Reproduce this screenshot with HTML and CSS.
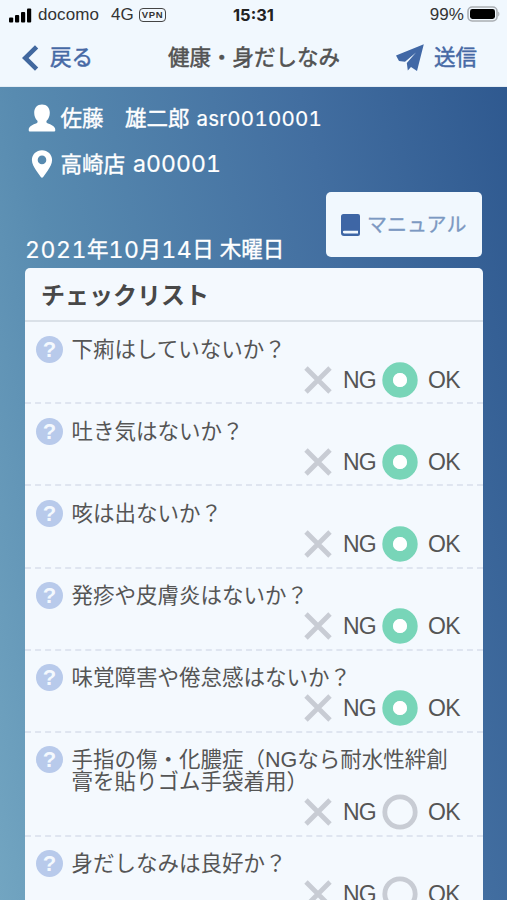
FILE: index.html
```html
<!DOCTYPE html>
<html lang="ja">
<head>
<meta charset="utf-8">
<title>健康・身だしなみ</title>
<link rel="stylesheet" href="styles.css">
</head>
<body>
<svg class="defs" width="0" height="0" aria-hidden="true">
  <symbol id="cross" viewBox="0 0 28 28"><path d="M2 2L26 26M26 2L2 26" stroke="#c8ccd4" stroke-width="4.8" fill="none"/></symbol>
  <symbol id="on" viewBox="0 0 36 36"><circle cx="18" cy="18" r="12.3" fill="none" stroke="#78d5b8" stroke-width="10.8"/><circle cx="18" cy="18" r="7" fill="#fff"/></symbol>
  <symbol id="off" viewBox="0 0 36 36"><circle cx="18" cy="18" r="15.2" fill="none" stroke="#c8ccd4" stroke-width="4.8"/></symbol>
</svg>
<header class="top">
  <div class="status">
    <svg class="signal" viewBox="0 0 23 15"><rect x="0" y="9.5" width="4.2" height="5" rx="1"/><rect x="6" y="7" width="4.2" height="7.5" rx="1"/><rect x="12" y="4" width="4.2" height="10.5" rx="1"/><rect x="18" y="0.5" width="4.2" height="14" rx="1"/></svg>
    <span class="carrier">docomo</span>
    <span class="net">4G</span>
    <span class="vpn">VPN</span>
    <span class="clock">15:31</span>
    <span class="percent">99%</span>
    <svg class="battery" viewBox="0 0 33 16"><rect x="1" y="1" width="29" height="14" rx="4.2" fill="none" stroke="#aaaeb3" stroke-width="1.6"/><rect x="3" y="3" width="25" height="10" rx="2.4"/><path d="M31.2 5.5c1.6.8 1.6 4.2 0 5z" fill="#aaaeb3"/></svg>
  </div>
  <nav class="nav">
    <a class="back"><svg viewBox="0 0 17 26"><path d="M14.6 1.8L3.2 13L14.6 24.2" fill="none" stroke="#41689f" stroke-width="4.6"/></svg><span>戻る</span></a>
    <h1>健康・身だしなみ</h1>
    <a class="send"><svg viewBox="0 0 28 28"><path d="M27.8 0.3L0 11.5L3 17L9 17.8L20 8.5L10.8 19L11.8 26.5L15 23L21 27Z" fill="#4168a6"/></svg><span>送信</span></a>
  </nav>
</header>
<main>
  <div class="info user">
    <svg viewBox="0 0 28 28"><path d="M14 0.5c4.9 0 7.8 3.500 7.800 8.200 0 3.500-1.300 6.200-3 7.800-.7.800-.5 2.300.6 2.800 3.600 1.400 7.900 3 7.900 6.600 0 1-.5 1.600-1.600 1.600H2.300c-1.100 0-1.600-.6-1.600-1.600 0-3.600 4.300-5.200 7.900-6.600 1.100-.5 1.300-2 .6-2.800-1.700-1.600-3-4.300-3-7.800C6.200 4 9.100.5 14 .5z" fill="#fff"/></svg>
    <span>佐藤　雄二郎</span><span class="code">asr0010001</span>
  </div>
  <div class="info shop">
    <svg viewBox="0 0 28 28"><path fill-rule="evenodd" d="M14 0.300C8.300.3 3.900 4.600 3.900 10c0 4 2.200 7.200 4.300 10.400L12.800 27c.7 1 1.700 1 2.400 0l4.600-6.600C21.900 17.200 24.100 14 24.100 10 24.100 4.600 19.700.3 14 .3zM14 5.600a4.300 4.300 0 1 1 0 8.600 4.300 4.300 0 0 1 0-8.600z" fill="#fff"/></svg>
    <span>高崎店</span><span class="code">a00001</span>
  </div>
  <div class="bar">
    <p class="date"><b>2021</b>年<b>10</b>月<b>14</b>日<i></i>木曜日</p>
    <a class="manual"><svg viewBox="0 0 19 22"><path fill-rule="evenodd" d="M2.500 0H17a2 2 0 0 1 2 2V20a2 2 0 0 1-2 2H3a3 3 0 0 1-3-3V2.500A2.500 2.500 0 0 1 2.500 0zM3.200 16.800a1.300 1.300 0 0 0 0 2.600H17V16.800z" fill="#3e66a5"/></svg><span>マニュアル</span></a>
  </div>
  <section class="card">
    <h2>チェックリスト</h2>
    <div class="row"><div class="q"><span class="help">?</span><p>下痢はしていないか<em>？</em></p></div><div class="opts"><svg class="x"><use href="#cross"/></svg><span class="ng">NG</span><svg class="o"><use href="#on"/></svg><span class="ok">OK</span></div></div>
    <div class="row"><div class="q"><span class="help">?</span><p>吐き気はないか<em>？</em></p></div><div class="opts"><svg class="x"><use href="#cross"/></svg><span class="ng">NG</span><svg class="o"><use href="#on"/></svg><span class="ok">OK</span></div></div>
    <div class="row"><div class="q"><span class="help">?</span><p>咳は出ないか<em>？</em></p></div><div class="opts"><svg class="x"><use href="#cross"/></svg><span class="ng">NG</span><svg class="o"><use href="#on"/></svg><span class="ok">OK</span></div></div>
    <div class="row"><div class="q"><span class="help">?</span><p>発疹や皮膚炎はないか<em>？</em></p></div><div class="opts"><svg class="x"><use href="#cross"/></svg><span class="ng">NG</span><svg class="o"><use href="#on"/></svg><span class="ok">OK</span></div></div>
    <div class="row"><div class="q"><span class="help">?</span><p>味覚障害や倦怠感はないか<em>？</em></p></div><div class="opts"><svg class="x"><use href="#cross"/></svg><span class="ng">NG</span><svg class="o"><use href="#on"/></svg><span class="ok">OK</span></div></div>
    <div class="row"><div class="q"><span class="help">?</span><p>手指の傷・化膿症（NGなら耐水性絆創<br>膏を貼りゴム手袋着用）</p></div><div class="opts"><svg class="x"><use href="#cross"/></svg><span class="ng">NG</span><svg class="o"><use href="#off"/></svg><span class="ok">OK</span></div></div>
    <div class="row"><div class="q"><span class="help">?</span><p>身だしなみは良好か<em>？</em></p></div><div class="opts"><svg class="x"><use href="#cross"/></svg><span class="ng">NG</span><svg class="o"><use href="#off"/></svg><span class="ok">OK</span></div></div>
  </section>
</main>
</body>
</html>
```
FILE: styles.css
```css
* { box-sizing: border-box; margin: 0; padding: 0; }
html, body { height: 900px; overflow: hidden; }
body {
  width: 507px;
  font-family: "Liberation Sans", "Noto Sans CJK JP", sans-serif;
  color: #555;
  background: linear-gradient(77deg, #72a5c1 0%, #588bb0 28%, #426ea0 68%, #2d578e 100%);
}
svg { display: block; flex: none; }
.defs { position: absolute; }
.top { height: 87px; background: #f1f8fe; border-bottom: 1px solid #e4edf5; }
.status { height: 30px; display: flex; align-items: center; padding: 0 8px 0 9px; color: #333; font-size: 17px; line-height: 30px; white-space: nowrap; }
.signal { width: 23px; height: 15px; }
.carrier { width: 67px; margin-left: 6px; letter-spacing: .1px; }
.net { width: 22px; margin-left: 6px; }
.vpn { width: 27px; height: 14px; margin-left: 6px; border: 1.4px solid #444; border-radius: 4px; font: bold 9.5px/11.5px "Liberation Sans", sans-serif; letter-spacing: .6px; text-align: center; }
.clock { margin-left: 67px; width: 44px; color: #222; font: bold 16.5px/30px Inter, sans-serif; }
.percent { margin-left: auto; letter-spacing: .1px; }
.battery { width: 33px; height: 16px; margin-left: 3px; margin-right: -1px; transform: translateY(-1px); }
.nav { height: 56px; display: flex; align-items: center; font-size: 21.5px; line-height: 56px; white-space: nowrap; }
.back, .send { display: flex; align-items: center; color: #4669a5; -webkit-text-stroke: .5px #4669a5; }
.back { margin-left: 22px; }
.back svg { width: 17px; height: 26px; margin-right: 11px; }
.nav h1 { font-size: 21.5px; font-weight: 400; -webkit-text-stroke: .5px #4c4c4c; margin-left: 75px; }
.send { margin-left: auto; margin-right: 30px; }
.send svg { width: 28px; height: 28px; margin-right: 10px; }
main { padding: 0 25px; }
.info { display: flex; align-items: center; height: 46px; padding-left: 3px; color: #fff; font-size: 21.5px; line-height: 46px; -webkit-text-stroke: .4px #fff; white-space: nowrap; }
.info svg { width: 28px; height: 28px; margin-right: 4.5px; }
.user { margin-top: 8px; }
.info span:not(.code) { padding-top: 2px; }
.code, .date b { font-family: Inter, "Liberation Sans", sans-serif; font-weight: 400; font-feature-settings: "tnum"; -webkit-text-stroke: .2px #fff; }
.code { margin-left: 7px; font-size: 20.5px; letter-spacing: .25px; }
.user .code { padding-top: 2px; }
.shop .code { margin-left: 8px; font-size: 23px; letter-spacing: .1px; }
.bar { display: flex; justify-content: space-between; height: 81px; padding-top: 5px; }
.date { display: flex; height: 32px; margin-top: 42px; color: #fff; font-size: 21.5px; line-height: 32px; -webkit-text-stroke: .4px #fff; white-space: nowrap; }
.date b { font-size: 23px; letter-spacing: .6px; }
.date i { width: 6px; }
.manual { display: flex; align-items: center; width: 156px; height: 65px; padding-left: 15px; border-radius: 5px; background: #f1f8fe; color: #7c99c2; font-size: 20px; line-height: 65px; -webkit-text-stroke: .3px #7c99c2; white-space: nowrap; }
.manual span { padding-top: 2px; }
.manual svg { width: 19px; height: 22px; margin-right: 7px; }
.card { width: 458px; height: 632px; overflow: hidden; border-radius: 5px 5px 0 0; background: #f4f9fe; }
.card h2 { height: 54px; padding: 1px 0 0 16px; border-bottom: 2px solid #dae1e8; font-size: 24px; line-height: 53px; font-weight: 700; color: #484848; white-space: nowrap; }
.row { padding: 13.5px 0 5.2px 11px; border-bottom: 2px dashed #dfe5f0; height: 82.2px; }
.row:nth-child(7) { height: 103.7px; }
.q { display: flex; height: 26px; }
.help { width: 27px; height: 27px; margin-right: 8.5px; border-radius: 50%; background: #b8caeb; color: #f4f9fe; font: bold 22px/27px "Liberation Sans", sans-serif; text-align: center; }
.q p { padding-top: 4px; font-size: 21.5px; line-height: 21.5px; white-space: nowrap; }
.q em { font-style: normal; }
.row:nth-child(7) .q { height: 47.5px; }
.opts { display: flex; align-items: center; justify-content: flex-end; height: 36px; padding-right: 22px; font-size: 23px; white-space: nowrap; }
.ng, .ok { padding-top: 1px; }
.x { width: 28px; height: 28px; margin-right: 11px; }
.ng { width: 33px; letter-spacing: -.8px; }
.o { width: 36px; height: 36px; margin: 0 10px 0 6px; }
.ok { width: 33px; letter-spacing: -.6px; }
```
